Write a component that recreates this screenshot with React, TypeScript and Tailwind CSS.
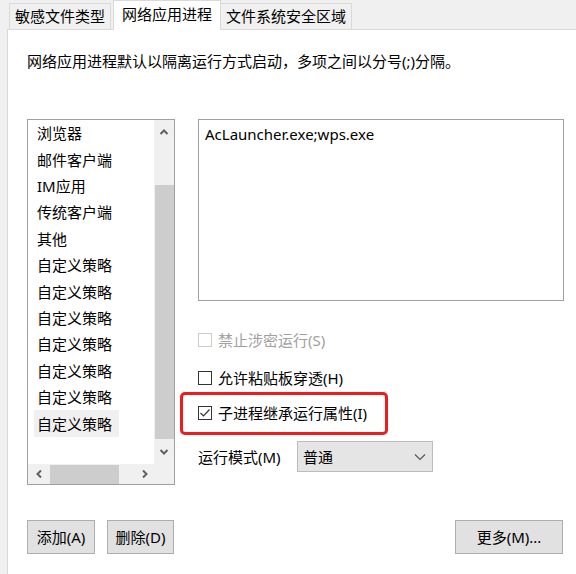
import React from 'react';

const items = [
  '浏览器',
  '邮件客户端',
  'IM应用',
  '传统客户端',
  '其他',
  '自定义策略',
  '自定义策略',
  '自定义策略',
  '自定义策略',
  '自定义策略',
  '自定义策略',
  '自定义策略',
];

const Arrow: React.FC<{ dir: 'up' | 'down' | 'left' | 'right' }> = ({ dir }) => {
  const d = {
    up: 'M1.5 6 L5 2.5 L8.5 6',
    down: 'M1.5 3 L5 6.5 L8.5 3',
    left: 'M6 1.5 L2.5 5 L6 8.5',
    right: 'M3 1.5 L6.5 5 L3 8.5',
  }[dir];
  return (
    <svg width="10" height="10" viewBox="0 0 10 10">
      <path d={d} fill="none" stroke="#606060" strokeWidth="2" />
    </svg>
  );
};

const Checkbox: React.FC<{ checked?: boolean; disabled?: boolean }> = ({ checked, disabled }) => (
  <span
    className={`w-[14px] h-[14px] border bg-white flex items-center justify-center ${
      disabled ? 'border-[#cccccc]' : 'border-[#333333]'
    }`}
  >
    {checked && (
      <svg width="12" height="12" viewBox="0 0 12 12">
        <path d="M1.5 6 L4.5 9 L10.5 2.5" fill="none" stroke="#333333" strokeWidth="1.2" />
      </svg>
    )}
  </span>
);

const App: React.FC = () => {
  return (
    <div
      className="w-[576px] h-[574px] bg-[#f0f0f0] flex flex-col overflow-hidden text-[15px] text-black"
      style={{ fontFamily: '"Noto Sans", "Noto Sans CJK SC", sans-serif' }}
    >
      {/* Tabs */}
      <div className="flex items-end h-[29px] pl-[9px] shrink-0">
        <div className="w-[102px] h-[26px] border border-b-0 border-[#d9d9d9] bg-[#f0f0f0] flex items-center justify-center pb-[2px] leading-5">
          敏感文件类型
        </div>
        <div className="relative z-10 ml-[2px] w-[108px] h-[30px] -mb-px border border-b-0 border-[#d9d9d9] bg-white flex justify-center pt-[3px] leading-5">
          网络应用进程
        </div>
        <div className="w-[131px] h-[26px] border border-b-0 border-l-0 border-[#d9d9d9] bg-[#f0f0f0] flex items-center justify-center pb-[2px] leading-5">
          文件系统安全区域
        </div>
      </div>

      {/* Panel */}
      <div className="flex-1 ml-[7px] bg-white border-t border-l border-[#d9d9d9] pl-[19px] flex flex-col">
        <div className="mt-[21px] leading-5">网络应用进程默认以隔离运行方式启动，多项之间以分号(;)分隔。</div>

        <div className="mt-[48px] flex gap-[23px]">
          {/* List box */}
          <div className="w-[148px] h-[366px] border border-[#a0a0a0] flex flex-col">
            <div className="flex flex-1 min-h-0">
              <div className="flex-1 flex flex-col">
                {items.map((it, i) => (
                  <div key={i} className="h-[26.4px] flex items-center">
                    <span
                      className={`ml-[6px] w-[85px] h-[27px] px-[3px] flex items-center leading-5 ${
                        i === items.length - 1 ? 'bg-[#f0f0f0]' : ''
                      }`}
                    >
                      {it}
                    </span>
                  </div>
                ))}
              </div>
              <div className="w-[20px] bg-[#f0f0f0] flex flex-col items-center">
                <div className="h-[24px] flex items-center justify-center pt-[2px]">
                  <Arrow dir="up" />
                </div>
                <div className="mt-[41px] w-[19px] h-[254px] bg-[#cdcdcd]" />
                <div className="flex-1 flex items-center justify-center">
                  <Arrow dir="down" />
                </div>
              </div>
            </div>
            <div className="h-[20px] bg-[#f0f0f0] flex items-center">
              <div className="w-[22px] flex justify-center pl-[2px]">
                <Arrow dir="left" />
              </div>
              <div className="w-[69px] h-[19px] bg-[#cdcdcd]" />
              <div className="w-[34px] flex justify-end pr-[3px]">
                <Arrow dir="right" />
              </div>
            </div>
          </div>

          {/* Right column */}
          <div className="flex flex-col">
            <div className="w-[366px] h-[182px] border border-[#a0a0a0] px-[6px] pt-[4px] leading-5">
              AcLauncher.exe;wps.exe
            </div>

            <div className="mt-[29px] h-[20px] flex items-center gap-[6px] text-[#a0a0a0] leading-5">
              <Checkbox disabled />
              <span>禁止涉密运行(S)</span>
            </div>
            <div className="mt-[18px] h-[20px] flex items-center gap-[6px] leading-5">
              <Checkbox />
              <span>允许粘贴板穿透(H)</span>
            </div>
            <div className="relative mt-[15px] h-[20px] flex items-center gap-[6px] leading-5">
              <Checkbox checked />
              <span>子进程继承运行属性(I)</span>
              <div className="absolute left-[-18px] top-[-11px] w-[208px] h-[43px] border-[3px] border-[#f01c1c] rounded-[5px]" />
            </div>

            <div className="mt-[18px] flex items-center">
              <span className="w-[99px] leading-5">运行模式(M)</span>
              <div className="w-[136px] h-[31px] bg-[#e5e5e5] border border-[#bcbcbc] flex items-center justify-between pl-[5px] pr-[6px] leading-5">
                <span>普通</span>
                <svg width="12" height="8" viewBox="0 0 12 8">
                  <path d="M1 1.5 L6 6.5 L11 1.5" fill="none" stroke="#555555" strokeWidth="1.1" />
                </svg>
              </div>
            </div>
          </div>
        </div>

        {/* Buttons */}
        <div className="mt-[35px] flex items-center pr-[13px]">
          <button className="w-[68px] h-[34px] bg-[#e1e1e1] border border-[#adadad] leading-5">添加(A)</button>
          <button className="ml-[12px] w-[67px] h-[34px] bg-[#e1e1e1] border border-[#adadad] leading-5">删除(D)</button>
          <button className="ml-auto w-[108px] h-[34px] bg-[#e1e1e1] border border-[#adadad] leading-5">更多(M)...</button>
        </div>
      </div>
    </div>
  );
};

export default App;
